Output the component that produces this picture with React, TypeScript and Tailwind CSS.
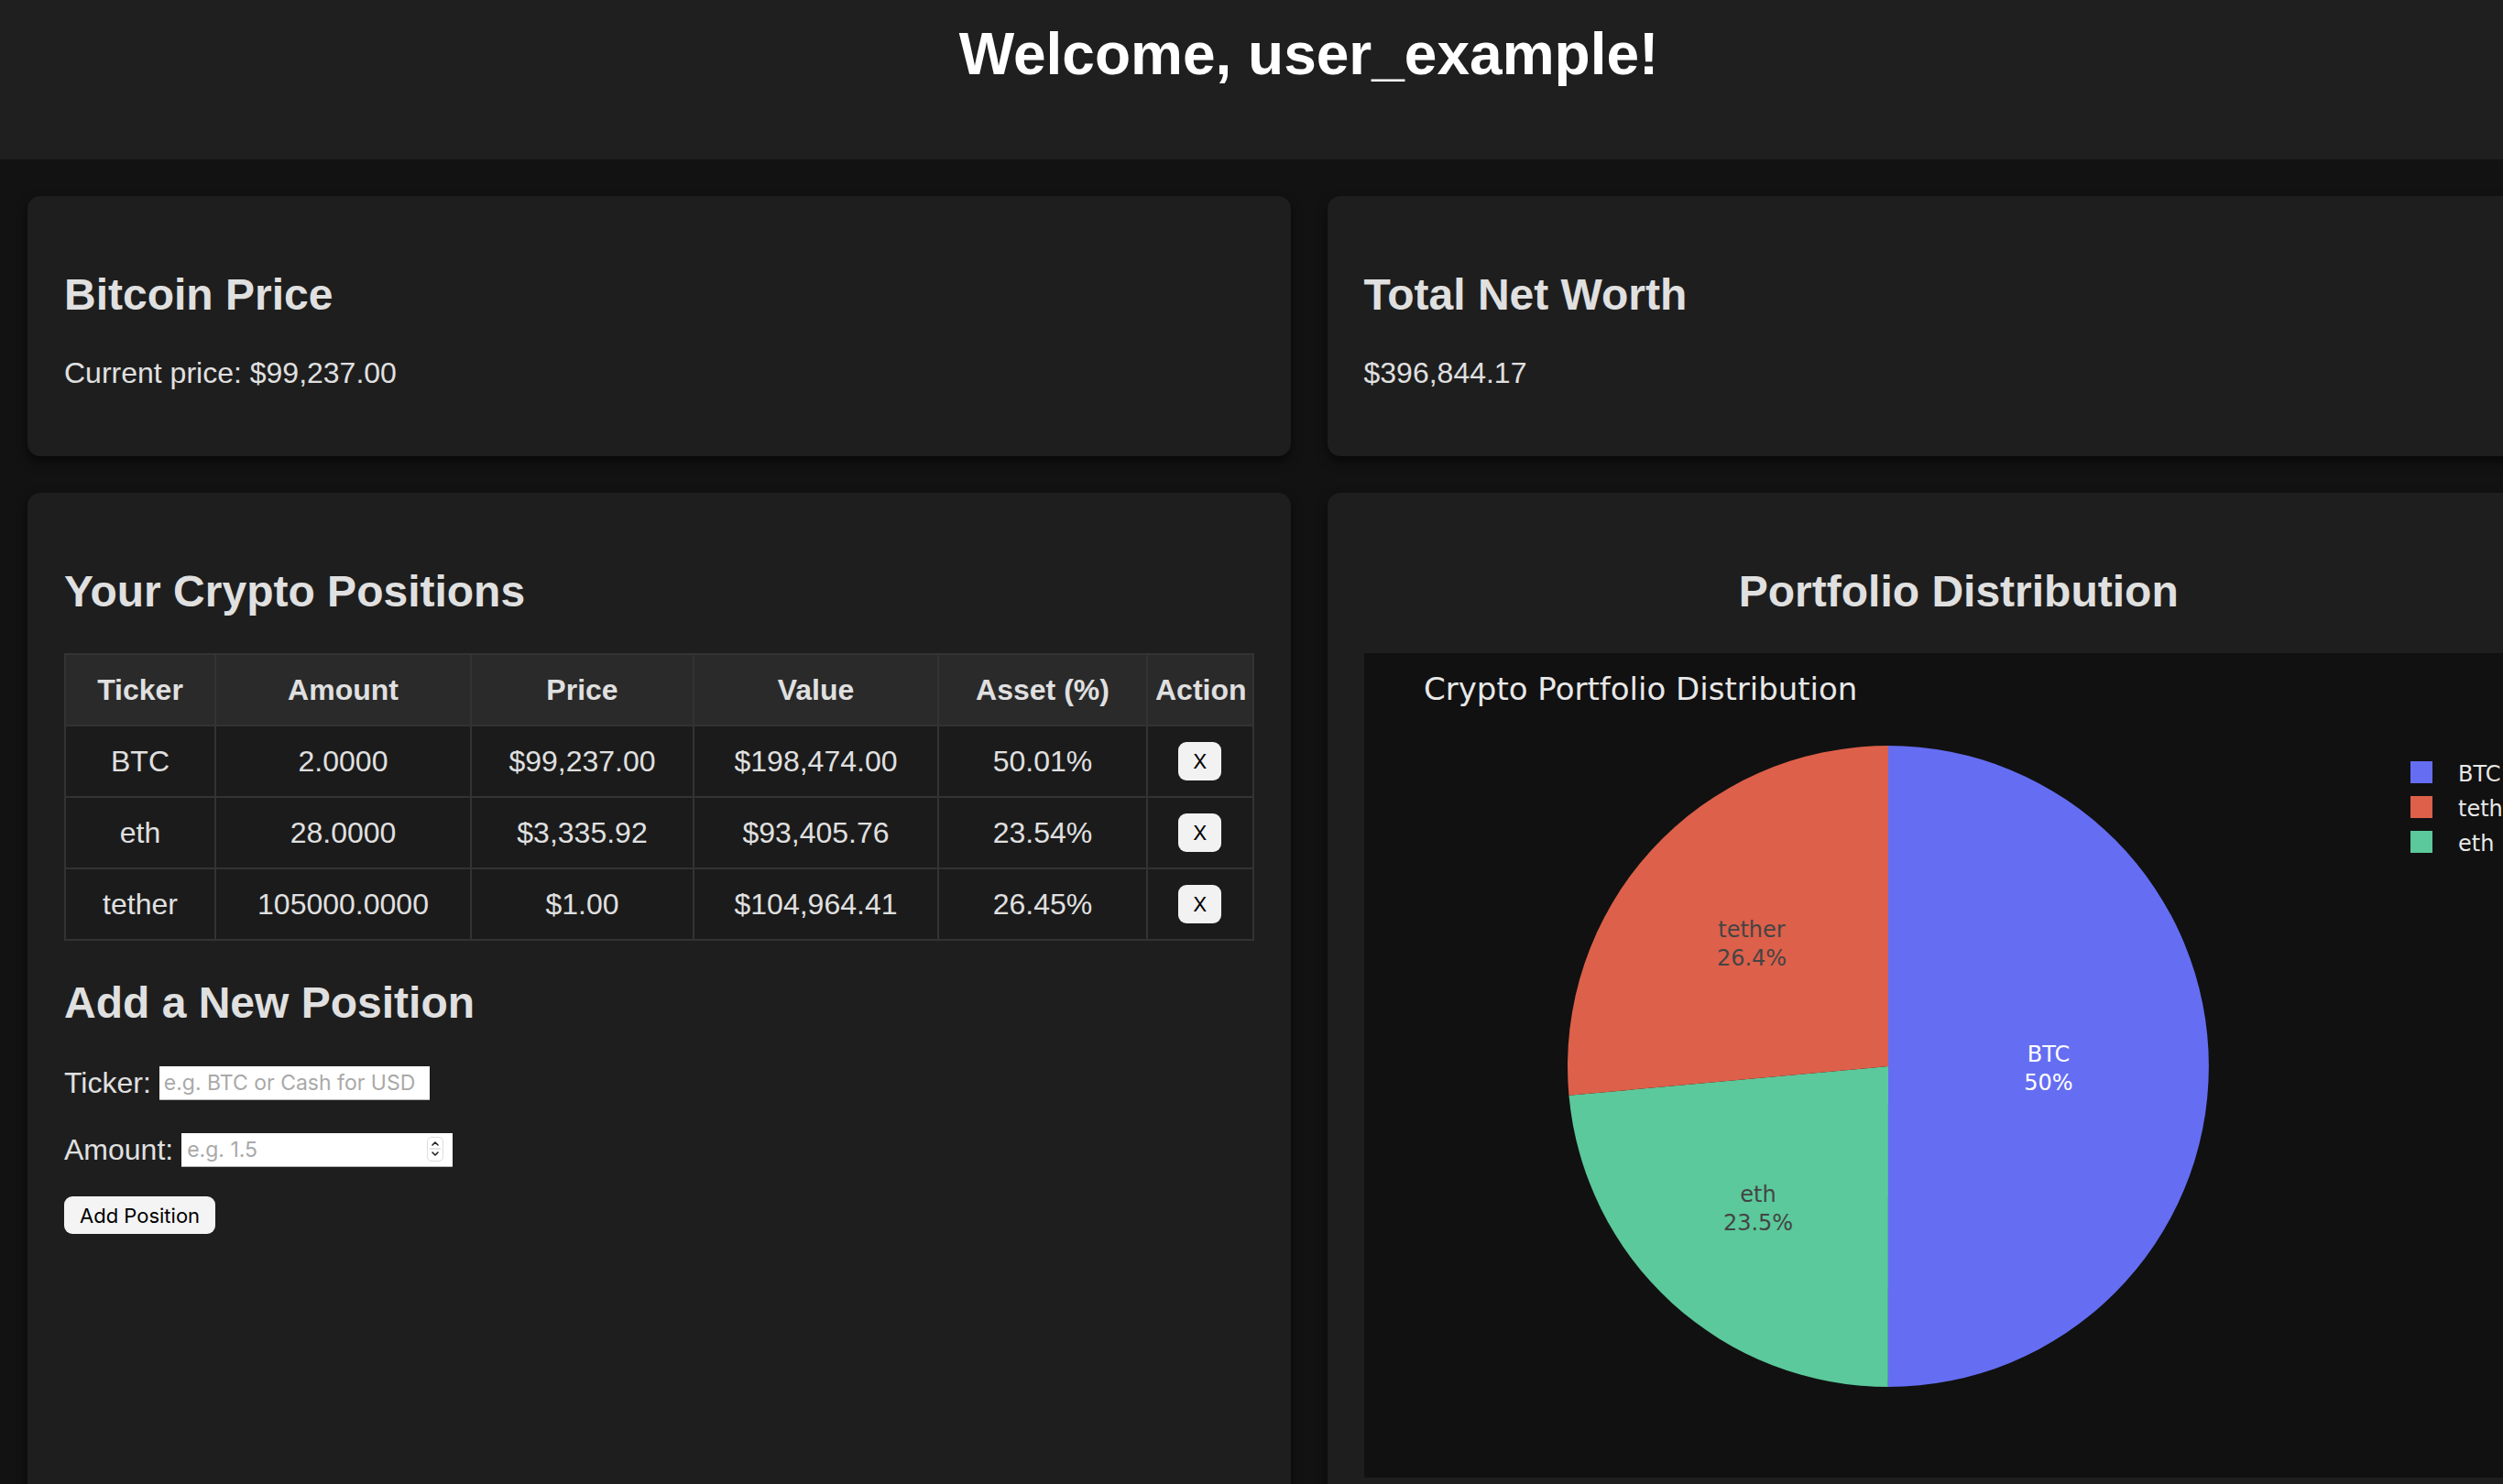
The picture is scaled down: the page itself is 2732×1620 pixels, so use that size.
import React from "react";

const rows = [
  { t: "BTC", a: "2.0000", p: "$99,237.00", v: "$198,474.00", pct: "50.01%" },
  { t: "eth", a: "28.0000", p: "$3,335.92", v: "$93,405.76", pct: "23.54%" },
  { t: "tether", a: "105000.0000", p: "$1.00", v: "$104,964.41", pct: "26.45%" },
];

const CX = 572;
const CY = 451;
const R = 350;

function pt(deg: number): [number, number] {
  const a = (deg * Math.PI) / 180;
  return [CX + R * Math.sin(a), CY - R * Math.cos(a)];
}

function slice(a0: number, a1: number) {
  const [x0, y0] = pt(a0);
  const [x1, y1] = pt(a1);
  const large = a1 - a0 > 180 ? 1 : 0;
  return `M${CX},${CY} L${x0.toFixed(2)},${y0.toFixed(2)} A${R},${R} 0 ${large} 1 ${x1.toFixed(2)},${y1.toFixed(2)} Z`;
}

function PieChart() {
  const btcEnd = 0.5001 * 360;
  const ethEnd = btcEnd + 0.2354 * 360;
  const font = "'DejaVu Sans', Verdana, sans-serif";
  return (
    <svg width="1299" height="900" viewBox="0 0 1299 900" className="block">
      <text x="65" y="51" fontFamily={font} fontSize="34" fill="#e8e8e8">
        Crypto Portfolio Distribution
      </text>
      <path d={slice(0, btcEnd)} fill="#656ef2" />
      <path d={slice(btcEnd, ethEnd)} fill="#5bc99b" />
      <path d={slice(ethEnd, 360)} fill="#dd604a" />
      <g fontFamily={font} fontSize="24" textAnchor="middle">
        <text x="423" y="310" fill="#444444">tether</text>
        <text x="423" y="341" fill="#444444">26.4%</text>
        <text x="747" y="446" fill="#ffffff">BTC</text>
        <text x="747" y="477" fill="#ffffff">50%</text>
        <text x="430" y="599" fill="#444444">eth</text>
        <text x="430" y="630" fill="#444444">23.5%</text>
      </g>
      <g fontFamily={font} fontSize="24" fill="#e8e8e8">
        <rect x="1142" y="118" width="24" height="24" fill="#656ef2" />
        <text x="1194" y="140">BTC</text>
        <rect x="1142" y="156" width="24" height="24" fill="#dd604a" />
        <text x="1194" y="178">tether</text>
        <rect x="1142" y="194" width="24" height="24" fill="#5bc99b" />
        <text x="1194" y="216">eth</text>
      </g>
    </svg>
  );
}

function Card({ children }: { children: React.ReactNode }) {
  return (
    <div className="bg-[#1e1e1e] rounded-[14px] p-[40px] shadow-[0_6px_12px_rgba(0,0,0,0.55)]">
      {children}
    </div>
  );
}

function H2({ children, center }: { children: React.ReactNode; center?: boolean }) {
  return (
    <h2
      className={
        center
          ? "text-[48px] font-bold leading-[55px] my-[40px] text-[#e0e0e0] text-center"
          : "text-[48px] font-bold leading-[55px] my-[40px] text-[#e0e0e0]"
      }
    >
      {children}
    </h2>
  );
}

function XButton() {
  return (
    <button className="mx-auto w-[47px] h-[42px] rounded-[9px] bg-[#f2f2f2] text-black text-[22px] font-['Inter',sans-serif] leading-none flex items-center justify-center">
      X
    </button>
  );
}

export default function App() {
  const th =
    "border-2 border-[#333333] bg-[#2a2a2a] text-center py-[20px] px-[8px] leading-[36px] text-[32px] font-bold text-[#e0e0e0]";
  const td =
    "border-2 border-[#333333] bg-[#1b1b1b] text-center py-[20px] px-[8px] leading-[36px] text-[32px] text-[#e0e0e0]";
  const tdBtn =
    "border-2 border-[#333333] bg-[#1b1b1b] text-center py-[17px] px-[8px] leading-none align-middle";
  return (
    <div className="w-[2857px] min-h-screen bg-[#121212] font-['Liberation_Sans',Arial,sans-serif] text-[#e0e0e0]">
      <header className="h-[174px] bg-[#1f1f1f] text-center pt-[22px]">
        <h1 className="text-[64px] font-bold leading-[74px] text-white">Welcome, user_example!</h1>
      </header>
      <main className="grid grid-cols-2 gap-[40px] px-[30px] pt-[40px] pb-[40px]">
        <Card>
          <H2>Bitcoin Price</H2>
          <p className="text-[32px] leading-[37px] mb-[32px]">Current price: $99,237.00</p>
        </Card>
        <Card>
          <H2>Total Net Worth</H2>
          <p className="text-[32px] leading-[37px] mb-[32px]">$396,844.17</p>
        </Card>
        <Card>
          <H2>Your Crypto Positions</H2>
          <table className="w-full table-fixed border-collapse border-2 border-[#333333]">
            <colgroup>
              <col className="w-[164px]" />
              <col className="w-[279px]" />
              <col className="w-[243px]" />
              <col className="w-[267px]" />
              <col className="w-[228px]" />
              <col />
            </colgroup>
            <thead>
              <tr>
                <th className={th}>Ticker</th>
                <th className={th}>Amount</th>
                <th className={th}>Price</th>
                <th className={th}>Value</th>
                <th className={th}>Asset (%)</th>
                <th className={th}>Action</th>
              </tr>
            </thead>
            <tbody>
              {rows.map((r) => (
                <tr key={r.t}>
                  <td className={td}>{r.t}</td>
                  <td className={td}>{r.a}</td>
                  <td className={td}>{r.p}</td>
                  <td className={td}>{r.v}</td>
                  <td className={td}>{r.pct}</td>
                  <td className={tdBtn}>
                    <XButton />
                  </td>
                </tr>
              ))}
            </tbody>
          </table>
          <H2>Add a New Position</H2>
          <div className="flex items-center h-[40px] gap-[9px]">
            <label className="text-[32px] leading-[37px]">Ticker:</label>
            <input
              type="text"
              placeholder="e.g. BTC or Cash for USD"
              className="w-[295px] h-[37px] bg-white text-black px-[5px] text-[23px] font-['Inter',sans-serif] placeholder:text-[#a9a9a9] border-b border-[#b8b8b8] outline-none"
            />
          </div>
          <div className="flex items-center h-[40px] gap-[9px] mt-[33px]">
            <label className="text-[32px] leading-[37px]">Amount:</label>
            <div className="relative w-[296px] h-[37px]">
              <input
                type="text"
                placeholder="e.g. 1.5"
                className="w-full h-full bg-white text-black px-[6px] text-[23px] font-['Inter',sans-serif] placeholder:text-[#a9a9a9] border-b border-[#b8b8b8] outline-none"
              />
              <div className="absolute right-[10px] top-[4px] w-[18px] h-[27px] rounded-[5px] border border-[#dddddd] bg-white flex flex-col items-center justify-center">
                <svg width="12" height="22" viewBox="0 0 12 22">
                  <path d="M3 7 L6 4 L9 7" stroke="#222" strokeWidth="1.6" fill="none" strokeLinecap="round" strokeLinejoin="round" />
                  <line x1="0" y1="11" x2="12" y2="11" stroke="#cccccc" strokeWidth="1" />
                  <path d="M3 15 L6 18 L9 15" stroke="#222" strokeWidth="1.6" fill="none" strokeLinecap="round" strokeLinejoin="round" />
                </svg>
              </div>
            </div>
          </div>
          <button className="mt-[31px] h-[41px] px-[17px] rounded-[9px] bg-[#f4f4f4] text-black text-[22px] font-['Inter',sans-serif] leading-none">
            Add Position
          </button>
        </Card>
        <Card>
          <H2 center>Portfolio Distribution</H2>
          <div className="bg-[#111111] h-[900px] w-full overflow-hidden">
            <PieChart />
          </div>
        </Card>
      </main>
    </div>
  );
}
